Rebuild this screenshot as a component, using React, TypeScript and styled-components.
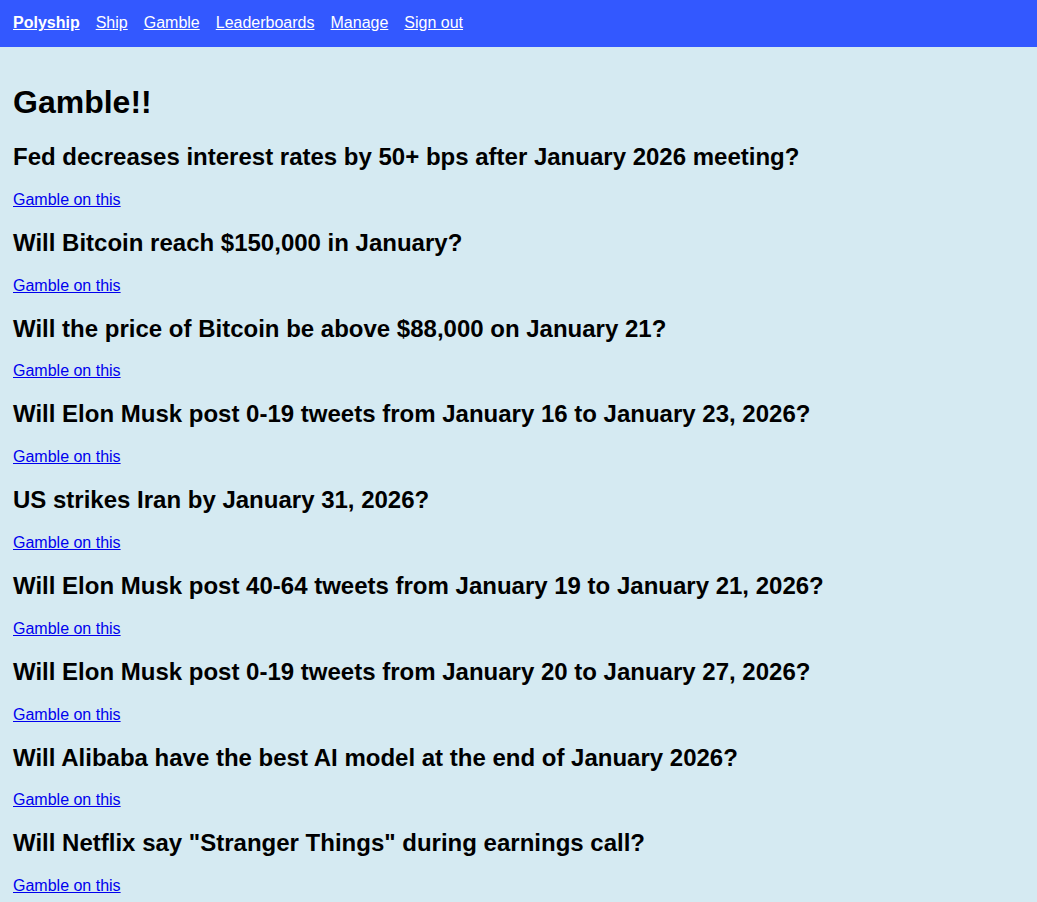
import styled, { createGlobalStyle } from 'styled-components';

const GlobalStyle = createGlobalStyle`
  body {
    margin: 0;
    background: #d5eaf2;
    font-family: "Liberation Sans", Arial, sans-serif;
  }
`;

const NavBar = styled.nav`
  display: flex;
  gap: 16px;
  padding: 14px 13px 15px;
  background: #3358ff;
  font-size: 16px;
`;

const NavLink = styled.a<{ $brand?: boolean }>`
  color: #ffffff;
  text-decoration: underline;
  font-weight: ${(p) => (p.$brand ? 'bold' : 'normal')};
  cursor: pointer;
`;

const Main = styled.main`
  padding: 16px 13px;
`;

const Title = styled.h1`
  font-size: 32px;
  margin: 21.44px 0;
`;

const Question = styled.h2`
  font-size: 24px;
  margin: 19.92px 0;
`;

const Action = styled.p`
  font-size: 16px;
  margin: 16px 0;
`;

const BetLink = styled.a`
  color: #0000ee;
  text-decoration: underline;
  cursor: pointer;
`;

const markets = [
  'Fed decreases interest rates by 50+ bps after January 2026 meeting?',
  'Will Bitcoin reach $150,000 in January?',
  'Will the price of Bitcoin be above $88,000 on January 21?',
  'Will Elon Musk post 0-19 tweets from January 16 to January 23, 2026?',
  'US strikes Iran by January 31, 2026?',
  'Will Elon Musk post 40-64 tweets from January 19 to January 21, 2026?',
  'Will Elon Musk post 0-19 tweets from January 20 to January 27, 2026?',
  'Will Alibaba have the best AI model at the end of January 2026?',
  'Will Netflix say "Stranger Things" during earnings call?',
];

const navItems = ['Ship', 'Gamble', 'Leaderboards', 'Manage', 'Sign out'];

export default function App() {
  return (
    <>
      <GlobalStyle />
      <NavBar>
        <NavLink $brand>Polyship</NavLink>
        {navItems.map((item) => (
          <NavLink key={item}>{item}</NavLink>
        ))}
      </NavBar>
      <Main>
        <Title>Gamble!!</Title>
        {markets.map((m) => (
          <section key={m}>
            <Question>{m}</Question>
            <Action>
              <BetLink>Gamble on this</BetLink>
            </Action>
          </section>
        ))}
      </Main>
    </>
  );
}
